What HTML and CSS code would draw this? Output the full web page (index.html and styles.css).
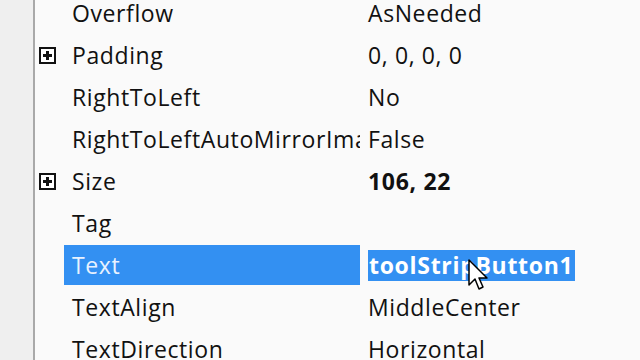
FILE: index.html
```html
<!DOCTYPE html>
<html>
<head>
<meta charset="utf-8">
<link rel="stylesheet" href="styles.css">
</head>
<body>
<div class="grid">
  <div class="gutter"></div>
  <div class="rows">
    <div class="row"><span class="exp"></span><span class="name">Overflow</span><span class="value">AsNeeded</span></div>
    <div class="row"><span class="exp"><span class="plus"></span></span><span class="name">Padding</span><span class="value">0, 0, 0, 0</span></div>
    <div class="row"><span class="exp"></span><span class="name">RightToLeft</span><span class="value">No</span></div>
    <div class="row"><span class="exp"></span><span class="name">RightToLeftAutoMirrorImage</span><span class="value">False</span></div>
    <div class="row"><span class="exp"><span class="plus"></span></span><span class="name">Size</span><span class="value bold">106, 22</span></div>
    <div class="row"><span class="exp"></span><span class="name">Tag</span><span class="value"></span></div>
    <div class="row selected"><span class="exp"></span><span class="name">Text</span><span class="value"><span class="sel bold">toolStripButton1</span></span></div>
    <div class="row"><span class="exp"></span><span class="name">TextAlign</span><span class="value">MiddleCenter</span></div>
    <div class="row"><span class="exp"></span><span class="name">TextDirection</span><span class="value">Horizontal</span></div>
  </div>
</div>
<svg class="cursor" width="22" height="36" viewBox="0 0 22 36">
  <path d="M1 1 L1 26 L7 20 L11 30 L15 28 L11 19 L19 19 Z" fill="#fff" stroke="#000" stroke-width="1.5" stroke-linejoin="round"/>
</svg>
</body>
</html>
```

FILE: styles.css
```css
html, body {
  margin: 0;
  padding: 0;
  width: 640px;
  height: 360px;
  overflow: hidden;
  background: #fafafa;
}
body {
  position: relative;
  font-family: "Open Sans", "Noto Sans", sans-serif;
  font-size: 23px;
  letter-spacing: 0.6px;
  color: #111;
}
.grid {
  display: flex;
  height: 360px;
}
.gutter {
  width: 33px;
  flex: none;
  background: #efefef;
  border-right: 2px solid #a9a9a9;
}
.rows {
  flex: 1;
  display: flex;
  flex-direction: column;
  margin-top: -8px;
  min-width: 0;
}
.row {
  height: 42px;
  flex: none;
  display: grid;
  grid-template-columns: 29px 296px minmax(0, 1fr);
  align-items: center;
}
.exp {
  display: flex;
  align-items: center;
  justify-content: flex-start;
  height: 100%;
  padding-left: 4px;
}
.plus {
  width: 13px;
  height: 13px;
  border: 2px solid #111;
  position: relative;
  background: #fff;
}
.plus::before, .plus::after {
  content: "";
  position: absolute;
  background: #111;
}
.plus::before {
  left: 2px; right: 2px; top: 5px; height: 3px;
}
.plus::after {
  top: 2px; bottom: 2px; left: 5px; width: 3px;
}
.name {
  padding-left: 8px;
  white-space: nowrap;
  overflow: hidden;
  height: 40px;
  line-height: 40px;
}
.value {
  padding-left: 8px;
  white-space: nowrap;
  overflow: hidden;
}
.bold { font-weight: 700; letter-spacing: 0.7px; }
.selected .name {
  background: #3390f2;
  color: #e8f2ff;
}
.sel {
  display: inline-block;
  background: #3390f2;
  color: #fff;
  line-height: 31px;
  padding: 0 2px 0 1px;
}
.cursor {
  position: absolute;
  left: 468px;
  top: 259px;
}
```
